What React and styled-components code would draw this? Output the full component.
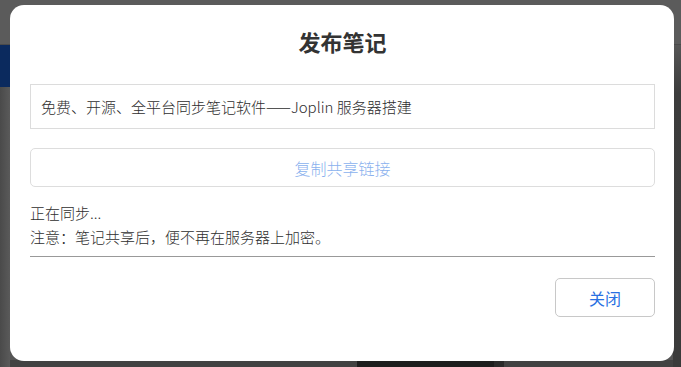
import React from 'react';
import styled, { createGlobalStyle } from 'styled-components';

const GlobalStyle = createGlobalStyle`
  html, body {
    margin: 0;
    padding: 0;
    height: 100%;
    overflow: hidden;
  }
  body {
    font-family: 'Noto Sans CJK SC', 'Noto Sans', sans-serif;
    background-color: #4f4f4f;
  }
  * {
    box-sizing: border-box;
  }
`;

// Dimmed app behind the modal
const Shell = styled.div`
  display: flex;
  flex-direction: column;
  height: 100vh;
`;

const TopBar = styled.div`
  height: 45px;
  background-color: #5b5b5b;
  border-bottom: 1px solid #4a4a4a;
`;

const Body = styled.div`
  flex: 1;
  display: flex;
`;

const SideBar = styled.div`
  width: 10px;
  background: linear-gradient(to right, #4a4a4a, #5a5a5a);
`;

const NavItem = styled.div`
  height: 42px;
  background-color: #0b2a5e;
`;

const Main = styled.div`
  flex: 1;
  display: flex;
  flex-direction: column;
  justify-content: flex-end;
  background-color: #555555;
`;

const BottomStrip = styled.div`
  height: 7px;
  display: flex;
  background-color: #424242;
`;

const DarkBlock = styled.div`
  width: ${(p) => p.$w}px;
  margin-left: ${(p) => p.$ml}px;
  background-color: ${(p) => p.$bg};
`;

const RightPane = styled.div`
  width: 8px;
  background: linear-gradient(to bottom, #555 0%, #3c3c3c 15%, #3a3a3a 100%);
`;

// Modal
const Overlay = styled.div`
  position: fixed;
  inset: 0;
  display: flex;
  padding: 5px 7px 6px 10px;
`;

const Dialog = styled.div`
  flex: 1;
  display: flex;
  flex-direction: column;
  background-color: #ffffff;
  border-radius: 14px;
  padding: 21px 19px 0 20px;
`;

const Title = styled.h2`
  margin: 0;
  text-align: center;
  font-size: 22px;
  line-height: 30px;
  font-weight: 700;
  color: #333333;
`;

const TitleInput = styled.div`
  margin-top: 28px;
  height: 45px;
  display: flex;
  align-items: center;
  padding: 0 10px;
  border: 1px solid #dcdcdc;
  font-size: 15px;
  font-weight: 300;
  color: #2e2e2e;
`;

const Button = styled.button`
  height: 39px;
  border: 1px solid ${(p) => (p.$disabled ? '#dddddd' : '#c8c8c8')};
  border-radius: 5px;
  background-color: #ffffff;
  font-family: inherit;
  font-size: 16px;
  font-weight: ${(p) => (p.$disabled ? 300 : 400)};
  color: ${(p) => (p.$disabled ? '#8ab1ee' : '#2a70e2')};
  cursor: pointer;
`;

const CopyButton = styled(Button)`
  margin-top: 19px;
  width: 100%;
`;

const Status = styled.div`
  margin-top: 14px;
  font-size: 15px;
  font-weight: 300;
  line-height: 24px;
  color: #2e2e2e;
`;

const Divider = styled.hr`
  margin: 7px 0 0;
  border: none;
  border-top: 1px solid #999999;
`;

const Footer = styled.div`
  display: flex;
  justify-content: flex-end;
  margin-top: 21px;
`;

const CloseButton = styled(Button)`
  width: 100px;
`;

function App() {
  return (
    <>
      <GlobalStyle />
      <Shell>
        <TopBar />
        <Body>
          <SideBar>
            <NavItem />
          </SideBar>
          <Main>
            <BottomStrip>
              <DarkBlock $w={137} $ml={347} $bg="#1d1d1d" />
              <DarkBlock $w={10} $ml={0} $bg="#2a2a2a" />
            </BottomStrip>
          </Main>
          <RightPane />
        </Body>
      </Shell>
      <Overlay>
        <Dialog>
          <Title>发布笔记</Title>
          <TitleInput>免费、开源、全平台同步笔记软件——Joplin 服务器搭建</TitleInput>
          <CopyButton $disabled>复制共享链接</CopyButton>
          <Status>
            正在同步...
            <br />
            注意：笔记共享后，便不再在服务器上加密。
          </Status>
          <Divider />
          <Footer>
            <CloseButton>关闭</CloseButton>
          </Footer>
        </Dialog>
      </Overlay>
    </>
  );
}

export default App;
